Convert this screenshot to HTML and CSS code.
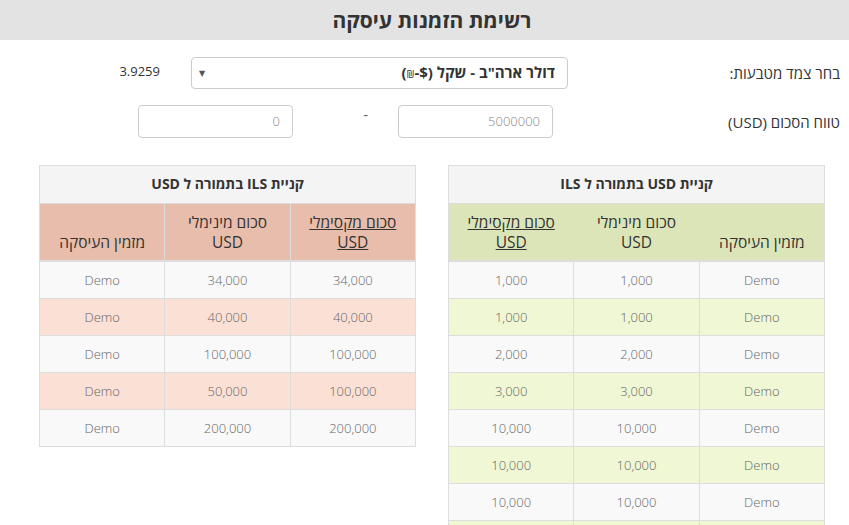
FILE: index.html
```html
<!DOCTYPE html>
<html lang="he" dir="rtl">
<head>
<meta charset="utf-8">
<title>רשימת הזמנות עיסקה</title>
<link rel="stylesheet" href="styles.css">
</head>
<body>
<h1 class="title">רשימת הזמנות עיסקה</h1>

<div class="form">
  <div class="row row-pair">
    <label class="label label-pair">בחר צמד מטבעות:</label>
    <div class="select">
      <span class="select-text">דולר ארה"ב - שקל ($-<span class="sym">₪</span>)</span>
      <span class="select-arrow">▼</span>
    </div>
    <span class="rate">3.9259</span>
  </div>
  <div class="row row-range">
    <label class="label label-range">טווח הסכום (USD)</label>
    <div class="input">5000000</div>
    <span class="dash">-</span>
    <div class="input">0</div>
  </div>
</div>

<div class="tables">
  <table class="grid grid-green">
    <thead>
      <tr><th colspan="3" class="cap">קניית USD בתמורה ל ILS</th></tr>
      <tr class="head">
        <th>מזמין העיסקה</th>
        <th>סכום מינימלי<br>USD</th>
        <th><u>סכום מקסימלי<br>USD</u></th>
      </tr>
    </thead>
    <tbody>
      <tr><td>Demo</td><td>1,000</td><td>1,000</td></tr>
      <tr><td>Demo</td><td>1,000</td><td>1,000</td></tr>
      <tr><td>Demo</td><td>2,000</td><td>2,000</td></tr>
      <tr><td>Demo</td><td>3,000</td><td>3,000</td></tr>
      <tr><td>Demo</td><td>10,000</td><td>10,000</td></tr>
      <tr><td>Demo</td><td>10,000</td><td>10,000</td></tr>
      <tr><td>Demo</td><td>10,000</td><td>10,000</td></tr>
      <tr class="partial"><td>&nbsp;</td><td>&nbsp;</td><td>&nbsp;</td></tr>
    </tbody>
  </table>

  <table class="grid grid-red">
    <thead>
      <tr><th colspan="3" class="cap">קניית ILS בתמורה ל USD</th></tr>
      <tr class="head">
        <th><u>סכום מקסימלי<br>USD</u></th>
        <th>סכום מינימלי<br>USD</th>
        <th>מזמין העיסקה</th>
      </tr>
    </thead>
    <tbody>
      <tr><td>34,000</td><td>34,000</td><td>Demo</td></tr>
      <tr><td>40,000</td><td>40,000</td><td>Demo</td></tr>
      <tr><td>100,000</td><td>100,000</td><td>Demo</td></tr>
      <tr><td>100,000</td><td>50,000</td><td>Demo</td></tr>
      <tr><td>200,000</td><td>200,000</td><td>Demo</td></tr>
    </tbody>
  </table>
</div>
</body>
</html>
```
FILE: styles.css
```css
* { box-sizing: border-box; }
html, body { margin: 0; padding: 0; background: #fff; }
body {
  font-family: "Open Sans", "DejaVu Sans", sans-serif;
  font-size: 14px;
  line-height: 20px;
  color: #333;
  direction: rtl;
  overflow: hidden;
  height: 525px;
}
.title {
  margin: 0;
  height: 40px;
  background: #e3e3e3;
  font-size: 21px;
  line-height: 40px;
  font-weight: 700;
  text-align: center;
  color: #333;
  padding-left: 15px;
}
.form { padding-right: 9px; }
.row { display: flex; align-items: center; }
.row-pair { margin-top: 17px; height: 32px; }
.row-range { margin-top: 16px; height: 33px; }
.label { font-size: 15px; color: #333; }
.label-pair { width: 272px; flex: none; }
.label-range { width: 287px; flex: none; }
.select {
  width: 377px;
  height: 32px;
  border: 1px solid #ccc;
  border-radius: 4px;
  display: flex;
  align-items: center;
  justify-content: space-between;
  padding: 0 12px 0 7px;
}
.select-text { font-weight: 700; font-size: 15px; color: #333; }
.sym { font-size: 10px; font-weight: 400; }
.select-arrow { font-size: 8px; color: #555; line-height: 1; }
.rate { margin-right: 31px; font-size: 13px; align-self: flex-start; margin-top: 4px; }
.input {
  width: 155px;
  height: 33px;
  border: 1px solid #ccc;
  border-radius: 4px;
  padding: 0 12px;
  line-height: 31px;
  color: #888;
  font-size: 13px;
  font-weight: 300;
  text-align: right;
}
.dash {
  width: 105px;
  text-align: right;
  padding-right: 30px;
  align-self: flex-start;
  margin-top: 0;
  color: #555;
}
.tables {
  display: flex;
  align-items: flex-start;
  gap: 32px;
  margin-top: 27px;
  padding-right: 24px;
}
.grid {
  border-collapse: collapse;
  width: 377px;
  table-layout: fixed;
  border: 1px solid #ddd;
}
.grid th, .grid td {
  border: 1px solid #ddd;
  padding: 8px;
  text-align: center;
}
.grid .cap {
  background: #f4f4f4;
  font-weight: 700;
  font-size: 14px;
  color: #333;
  padding: 8px 8px 9px;
}
.grid .head th {
  font-weight: 400;
  font-size: 15.5px;
  vertical-align: bottom;
  border-bottom: 2px solid #ddd;
  color: #333;
  padding: 8px;
}
.grid td {
  color: #666;
  font-weight: 300;
  font-size: 13px;
}
.grid tbody tr:nth-child(odd) td { background: #f9f9f9; }
.grid-green .head th { background: #dce5b8; }
.grid-green tbody tr:nth-child(even) td { background: #f0f7d4; }
.grid-red .head th { background: #e8bdab; }
.grid-red tbody tr:nth-child(even) td { background: #fae0d5; }
```
